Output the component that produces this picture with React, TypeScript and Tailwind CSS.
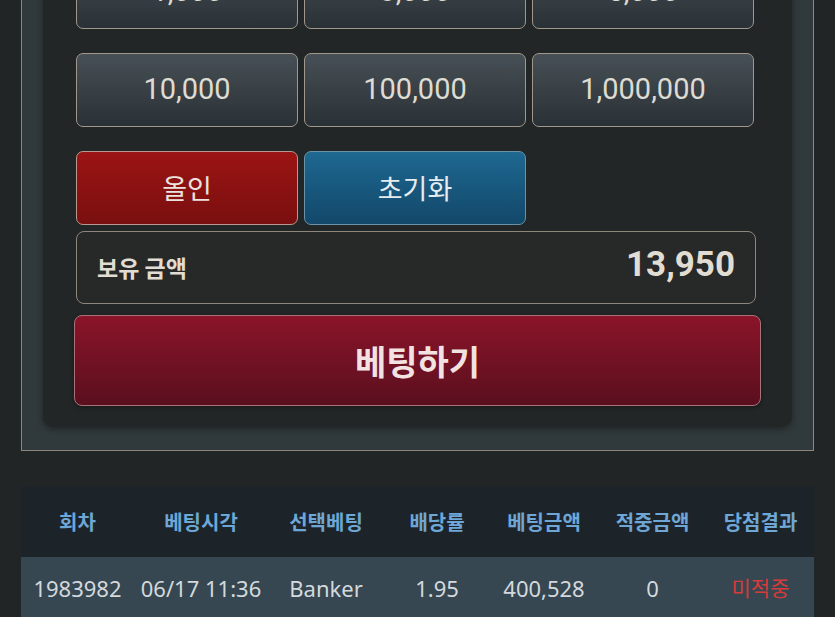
const chips = ['1,000', '3,000', '5,000', '10,000', '100,000', '1,000,000']

const cols = ['회차', '베팅시각', '선택베팅', '배당률', '베팅금액', '적중금액', '당첨결과']

const row = ['1983982', '06/17 11:36', 'Banker', '1.95', '400,528', '0']

const App = () => {
  return (
    <div className="min-h-[617px] h-[617px] overflow-hidden bg-[#222525] px-[21px] font-['Roboto','Noto_Sans_CJK_KR',sans-serif]">
      {/* Betting panel (scrolled, top is off screen) */}
      <div className="-mt-[100px] border border-[#8e887b] bg-[#30393b] px-[21px] pt-[21px] pb-[23px]">
        <div className="rounded-[10px] bg-[#222626] pl-[33px] pr-[31px] pt-[33px] pb-[21px] shadow-[0_2px_6px_rgba(0,0,0,0.35)]">
          <div className="grid w-[678px] grid-cols-3 gap-x-[6px] gap-y-[24px]">
            {chips.map((c) => (
              <button
                key={c}
                className="flex h-[74px] items-center justify-center rounded-[7px] border border-[#a0988a] bg-gradient-to-b from-[#475056] to-[#2a3136] text-[29px] text-[#dedbd3]"
              >
                {c}
              </button>
            ))}
            <button className="flex h-[74px] items-center justify-center rounded-[7px] border border-[#b89890] bg-gradient-to-b from-[#9c1414] to-[#7a0f0f] font-['Noto_Sans_CJK_KR',sans-serif] text-[27px] text-[#ece3de]">
              올인
            </button>
            <button className="flex h-[74px] items-center justify-center rounded-[7px] border border-[#6a93aa] bg-gradient-to-b from-[#1e6891] to-[#12486a] font-['Noto_Sans_CJK_KR',sans-serif] text-[27px] text-[#e6ecef]">
              초기화
            </button>
          </div>

          {/* Balance */}
          <div className="mt-[6px] flex h-[73px] w-[680px] items-center justify-between rounded-[8px] border border-[#8d877b] bg-[#272828] pl-[20px] pr-[20px]">
            <span className="font-['Noto_Sans_CJK_KR',sans-serif] text-[23px] font-bold text-[#e2ddd3]">보유 금액</span>
            <span className="-mt-[4px] text-[35px] font-bold text-[#e2ddd3]">13,950</span>
          </div>

          {/* Bet button */}
          <button className="-ml-[2px] mt-[11px] flex h-[91px] w-[687px] items-center justify-center rounded-[8px] border border-[#a87278] bg-gradient-to-b from-[#8b1429] to-[#5a0f1e] font-['Noto_Sans_CJK_KR',sans-serif] text-[34px] font-bold text-[#f3e2e2] shadow-[0_1px_4px_rgba(0,0,0,0.4)]">
            베팅하기
          </button>
        </div>
      </div>

      {/* History table */}
      <div className="mt-[35px] font-['Noto_Sans','Noto_Sans_CJK_KR',sans-serif]">
        <div className="grid h-[71px] grid-cols-[113px_134px_116px_106px_108px_109px_107px] items-center bg-[#1c242a]">
          {cols.map((c) => (
            <div key={c} className="text-center font-['Noto_Sans_CJK_KR',sans-serif] text-[20px] font-bold text-[#6ea7d6]">
              {c}
            </div>
          ))}
        </div>
        <div className="grid h-[64px] grid-cols-[113px_134px_116px_106px_108px_109px_107px] items-center bg-[#364751] pb-[2px]">
          {row.map((v, i) => (
            <div key={i} className="text-center text-[22px] text-[#d3d9dd]">
              {v}
            </div>
          ))}
          <div className="text-center font-['Noto_Sans_CJK_KR',sans-serif] text-[21px] text-[#d63b3b]">미적중</div>
        </div>
      </div>
    </div>
  )
}

export default App
